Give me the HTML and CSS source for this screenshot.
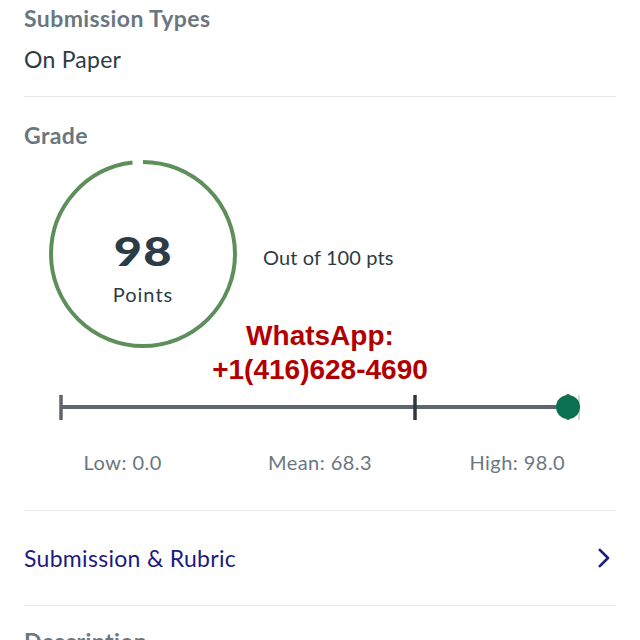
FILE: index.html
```html
<!DOCTYPE html>
<html lang="en">
<head>
    <meta charset="UTF-8">
    <title>Assignment Details</title>
    <meta name="viewport" content="width=device-width, initial-scale=1.0">
    <link rel="stylesheet" href="styles.css">
</head>
<body>

<div class="page">
    <div class="block first">
        <div class="label">Submission Types</div>
        <div class="value">On Paper</div>
    </div>

    <div class="block grade-block">
        <div class="label">Grade</div>

        <div class="grade-row">
            <div class="dial">
                <svg width="190" height="190" viewBox="0 0 190 190">
                    <!-- 98 of 100: arc starts at 12 o'clock, runs clockwise -->
                    <circle cx="95" cy="95" r="92" fill="none" stroke="#5e8f5a" stroke-width="4"
                            stroke-dasharray="566.5 578.1" transform="rotate(-90 95 95)"/>
                </svg>
                <div class="dial-text">
                    <div class="score">98</div>
                    <div class="score-unit">Points</div>
                </div>
            </div>
            <div class="out-of">Out of 100 pts</div>
        </div>

        <div class="stamp">WhatsApp:<br>+1(416)628-4690</div>

        <div class="range">
            <svg width="560" height="34" viewBox="0 0 560 34">
                <line x1="37" y1="17" x2="544" y2="17" stroke="#5f666b" stroke-width="4"/>
                <line x1="37" y1="5" x2="37" y2="30" stroke="#5f666b" stroke-width="3.5"/>
                <line x1="391" y1="5" x2="391" y2="30" stroke="#2f383d" stroke-width="3.5"/>
                <line x1="555" y1="5" x2="555" y2="30" stroke="#d6d9db" stroke-width="2"/>
                <!-- high score marker sits on its own tick -->
                <line x1="544" y1="4" x2="544" y2="30" stroke="#5f666b" stroke-width="3"/>
                <circle cx="544" cy="17" r="12" fill="#0b7050"/>
            </svg>
        </div>

        <div class="stats">
            <span>Low: 0.0</span>
            <span>Mean: 68.3</span>
            <span>High: 98.0</span>
        </div>
    </div>

    <div class="block nav-row">
        <span>Submission &amp; Rubric</span>
        <svg width="12" height="20" viewBox="0 0 12 20">
            <path d="M1.8 1.8 L10 10 L1.8 18.2" fill="none" stroke="#1c1c7e" stroke-width="2.6" stroke-linecap="round" stroke-linejoin="round"/>
        </svg>
    </div>

    <div class="block last">
        <div class="label">Description</div>
    </div>
</div>

</body>
</html>
```

FILE: styles.css
```css
body {
    margin: 0;
    background: #fff;
    font-family: Lato, "Open Sans", sans-serif;
    color: #2d3b45;
}
.page {
    padding: 0 24px;
    height: 640px;
    overflow: hidden;
}
.block {
    border-bottom: 1px solid #e7e9eb;
}
.first {
    padding-bottom: 24px;
}
.label {
    font-size: 23px;
    font-weight: bold;
    letter-spacing: 0.4px;
    color: #6b7780;
    line-height: 26px;
    padding-top: 5px;
}
.value {
    font-size: 23px;
    letter-spacing: 0.25px;
    line-height: 26px;
    margin-top: 15px;
}
.grade-block {
    position: relative;
    padding-top: 20px;
    padding-bottom: 36px;
}
.grade-row {
    display: flex;
    align-items: center;
    margin-top: 11px;
    padding-left: 24px;
}
.dial {
    position: relative;
    width: 190px;
    height: 190px;
}
.dial svg {
    display: block;
}
.dial-text {
    position: absolute;
    inset: 0;
    display: flex;
    flex-direction: column;
    align-items: center;
    padding-top: 68px;
}
.score {
    font-size: 40px;
    font-weight: 900;
    line-height: 48px;
    letter-spacing: 1px;
    transform: scaleX(1.22);
}
.score-unit {
    font-size: 20px;
    letter-spacing: 1px;
    line-height: 24px;
    margin-top: 7px;
}
.out-of {
    font-size: 20px;
    letter-spacing: 0.1px;
    margin-left: 25px;
    margin-top: 6px;
}
.stamp {
    position: absolute;
    left: 0;
    right: 0;
    top: 222px;
    text-align: center;
    font-family: "Liberation Sans", Arial, sans-serif;
    font-weight: bold;
    font-size: 28px;
    line-height: 34px;
    color: #b20000;
}
.range {
    margin-top: 41px;
}
.range svg {
    display: block;
}
.stats {
    display: grid;
    grid-template-columns: 1fr 1fr 1fr;
    text-align: center;
    margin-top: 26px;
    font-size: 20px;
    letter-spacing: 0.45px;
    line-height: 24px;
    color: #6b7780;
}
.nav-row {
    display: flex;
    justify-content: space-between;
    align-items: center;
    height: 94px;
    font-size: 23px;
    letter-spacing: 0.3px;
    color: #1c1c7e;
}
.nav-row svg {
    margin-right: 6px;
}
.last {
    border-bottom: none;
    padding-top: 17px;
}
```
